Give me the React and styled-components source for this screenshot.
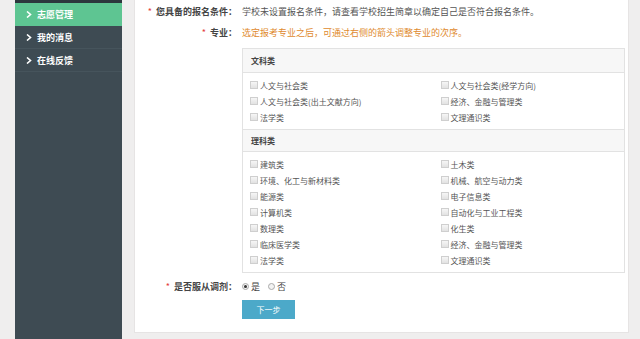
import React from "react";
import styled, { createGlobalStyle } from "styled-components";

const Global = createGlobalStyle`
  html, body { margin: 0; padding: 0; background: #efeeee; }
  body { font-family: "Noto Sans CJK SC", "Noto Sans", sans-serif; color: #555; }
  * { box-sizing: border-box; }
`;

const Page = styled.div`
  display: flex;
  height: 339px;
  padding-left: 15px;
  overflow: hidden;
`;

const Sidebar = styled.nav`
  width: 107px;
  flex: none;
  background: #3e4b53;
  border-top: 3px solid #2c373d;
  display: flex;
  flex-direction: column;
`;

const NavItem = styled.div`
  height: 23px;
  display: flex;
  align-items: center;
  gap: 5px;
  padding-left: 11px;
  font-size: 9px;
  font-weight: bold;
  color: #fff;
  background: ${(p) => (p.$active ? "#5ec592" : "transparent")};
  border-bottom: 1px solid ${(p) => (p.$active ? "#5ec592" : "#46545c")};
`;

const Chevron = styled.svg`
  width: 6px;
  height: 7px;
  flex: none;
`;

const Main = styled.div`
  flex: none;
  width: 495px;
  margin-left: 12px;
  height: 333px;
  background: #fff;
  border: 1px solid #e6e4e4;
  border-top: none;
  padding-top: 3px;
`;

const Row = styled.div`
  display: flex;
  align-items: center;
  min-height: ${(p) => p.$h || 22}px;
  font-size: 9px;
`;

const Label = styled.div`
  width: 107px;
  flex: none;
  text-align: right;
  font-weight: bold;
  color: #444;
  padding-right: 5px;
  white-space: nowrap;
`;

const Star = styled.span`
  color: #e4393c;
  margin-right: 4px;
  font-weight: normal;
`;

const Value = styled.div`
  color: ${(p) => p.$color || "#555"};
  white-space: nowrap;
`;

const Box = styled.div`
  margin-left: 107px;
  margin-top: 3px;
  width: 383px;
  border: 1px solid #e2e2e2;
`;

const SectionHead = styled.div`
  height: ${(p) => (p.$first ? 24 : 23)}px;
  display: flex;
  align-items: center;
  padding-left: 8px;
  font-size: 8px;
  font-weight: bold;
  color: #444;
  background: #f7f7f7;
  border-bottom: 1px solid #e2e2e2;
  border-top: ${(p) => (p.$first ? "none" : "1px solid #e2e2e2")};
`;

const Grid = styled.div`
  display: grid;
  grid-template-columns: 1fr 1fr;
  padding: 4px 0;
`;

const Item = styled.label`
  height: 16px;
  display: flex;
  align-items: center;
  gap: 2px;
  padding-left: 7px;
  font-size: 8px;
  color: #555;
  white-space: nowrap;
`;

const Check = styled.span`
  width: 8px;
  height: 8px;
  border: 1px solid #cfcfcf;
  background: linear-gradient(#f6f6f6, #e2e2e2);
  flex: none;
`;

const Radios = styled.div`
  display: flex;
  align-items: center;
  gap: 8px;
  font-size: 9px;
  color: #444;
`;

const Radio = styled.span`
  width: 7px;
  height: 7px;
  border-radius: 50%;
  border: 1px solid #aaa;
  background: #f3f3f3;
  display: inline-flex;
  align-items: center;
  justify-content: center;
  margin-right: 2px;
  &::after {
    content: "";
    width: 3px;
    height: 3px;
    border-radius: 50%;
    background: ${(p) => (p.$on ? "#333" : "transparent")};
  }
`;

const RadioOpt = styled.span`
  display: inline-flex;
  align-items: center;
`;

const Button = styled.button`
  display: block;
  margin-left: 107px;
  margin-top: 1px;
  width: 53px;
  height: 19px;
  border: none;
  background: #4ca9c9;
  color: #fff;
  font-family: inherit;
  font-size: 8px;
  padding: 0;
`;

const wen = [
  ["人文与社会类", "人文与社会类(经学方向)"],
  ["人文与社会类(出土文献方向)", "经济、金融与管理类"],
  ["法学类", "文理通识类"],
];
const li = [
  ["建筑类", "土木类"],
  ["环境、化工与新材料类", "机械、航空与动力类"],
  ["能源类", "电子信息类"],
  ["计算机类", "自动化与工业工程类"],
  ["数理类", "化生类"],
  ["临床医学类", "经济、金融与管理类"],
  ["法学类", "文理通识类"],
];

const Arrow = () => (
  <Chevron viewBox="0 0 6 7">
    <path d="M1 0.5 L4.5 3.5 L1 6.5" fill="none" stroke="#fff" strokeWidth="1.6" />
  </Chevron>
);

const Items = ({ rows }) => (
  <Grid>
    {rows.flat().map((t, i) => (
      <Item key={i}>
        <Check />
        {t}
      </Item>
    ))}
  </Grid>
);

export default function App() {
  return (
    <>
      <Global />
      <Page>
        <Sidebar>
          <NavItem $active>
            <Arrow />
            志愿管理
          </NavItem>
          <NavItem>
            <Arrow />
            我的消息
          </NavItem>
          <NavItem>
            <Arrow />
            在线反馈
          </NavItem>
        </Sidebar>
        <Main>
          <Row $h={16}>
            <Label>
              <Star>*</Star>您具备的报名条件：
            </Label>
            <Value>学校未设置报名条件，请查看学校招生简章以确定自己是否符合报名条件。</Value>
          </Row>
          <Row $h={26}>
            <Label>
              <Star>*</Star>专业：
            </Label>
            <Value $color="#e08a2e">选定报考专业之后，可通过右侧的箭头调整专业的次序。</Value>
          </Row>
          <Box>
            <SectionHead $first>文科类</SectionHead>
            <Items rows={wen} />
            <SectionHead>理科类</SectionHead>
            <Items rows={li} />
          </Box>
          <Row $h={26}>
            <Label>
              <Star>*</Star>是否服从调剂：
            </Label>
            <Radios>
              <RadioOpt>
                <Radio $on />是
              </RadioOpt>
              <RadioOpt>
                <Radio />否
              </RadioOpt>
            </Radios>
          </Row>
          <Button>下一步</Button>
        </Main>
      </Page>
    </>
  );
}
